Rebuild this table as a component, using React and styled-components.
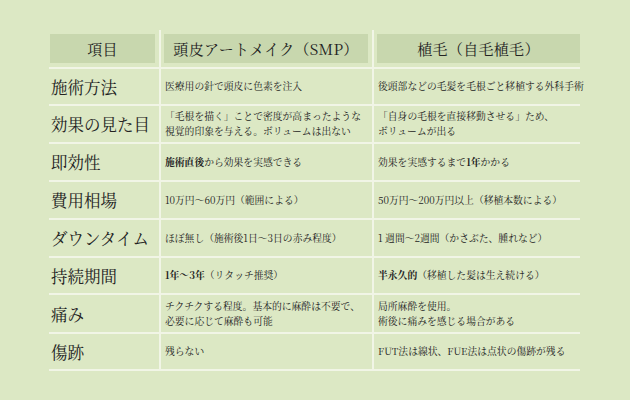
import styled, { createGlobalStyle } from 'styled-components';

const GlobalStyle = createGlobalStyle`
  html, body {
    margin: 0;
    padding: 0;
    background: #dce8c4;
  }
  body {
    font-family: "Noto Serif CJK JP", "IPAMincho", "Liberation Serif", "Noto Sans CJK JP", serif;
    color: #222;
  }
`;

const Page = styled.div`
  width: 630px;
  height: 400px;
  box-sizing: border-box;
  padding: 30px 0 0 49px;
  background: #dce8c4;
`;

const Table = styled.div`
  display: grid;
  grid-template-columns: 110px 213px 208px;
  width: 531px;
`;

const HeadCell = styled.div`
  box-sizing: border-box;
  padding: 4px ${p => (p.$last ? 0 : 4)}px 4px ${p => (p.$first ? 1 : 3)}px;
  border-left: ${p => (p.$first ? 'none' : '2px solid #f1f5e6')};
  border-bottom: 2px solid #f1f5e6;
`;

const HeadBox = styled.div`
  height: 29px;
  background: #c8d7ae;
  display: flex;
  align-items: center;
  justify-content: center;
  font-size: 15px;
  letter-spacing: 0.3px;
  white-space: nowrap;
`;

const Cell = styled.div`
  box-sizing: border-box;
  min-height: ${p => p.$h}px;
  display: flex;
  align-items: center;
  border-left: ${p => (p.$first ? 'none' : '2px solid #f1f5e6')};
  border-bottom: 2px solid #f1f5e6;
  padding: 0 0 0 ${p => (p.$first ? 2 : 4)}px;
  white-space: nowrap;
`;

const Label = styled.span`
  font-size: 16.5px;
`;

const Text = styled.span`
  font-size: 9.8px;
  line-height: 15px;
`;

const rows = [
  { h: 37, label: '施術方法', a: <>医療用の針で頭皮に色素を注入</>, b: <>後頭部などの毛髪を毛根ごと移植する外科手術</> },
  { h: 38, label: '効果の見た目', a: <>「毛根を描く」ことで密度が高まったような<br />視覚的印象を与える。ボリュームは出ない</>, b: <>「自身の毛根を直接移動させる」ため、<br />ボリュームが出る</> },
  { h: 38, label: '即効性', a: <><b>施術直後</b>から効果を実感できる</>, b: <>効果を実感するまで<b>1年</b>かかる</> },
  { h: 38, label: '費用相場', a: <>10万円～60万円（範囲による）</>, b: <>50万円～200万円以上（移植本数による）</> },
  { h: 38, label: 'ダウンタイム', a: <>ほぼ無し（施術後1日～3日の赤み程度）</>, b: <>1 週間～2週間（かさぶた、腫れなど）</> },
  { h: 37, label: '持続期間', a: <><b>1年～3年</b>（リタッチ推奨）</>, b: <><b>半永久的</b>（移植した髪は生え続ける）</> },
  { h: 39, label: '痛み', a: <>チクチクする程度。基本的に麻酔は不要で、<br />必要に応じて麻酔も可能</>, b: <>局所麻酔を使用。<br />術後に痛みを感じる場合がある</> },
  { h: 37, label: '傷跡', a: <>残らない</>, b: <>FUT法は線状、FUE法は点状の傷跡が残る</> },
];

export default function App() {
  return (
    <>
      <GlobalStyle />
      <Page>
        <Table>
          <HeadCell $first><HeadBox>項目</HeadBox></HeadCell>
          <HeadCell><HeadBox>頭皮アートメイク（SMP）</HeadBox></HeadCell>
          <HeadCell $last><HeadBox>植毛（自毛植毛）</HeadBox></HeadCell>
          {rows.map(r => (
            <>
              <Cell key={r.label + 'l'} $first $h={r.h}><Label>{r.label}</Label></Cell>
              <Cell key={r.label + 'a'} $h={r.h}><Text>{r.a}</Text></Cell>
              <Cell key={r.label + 'b'} $h={r.h}><Text>{r.b}</Text></Cell>
            </>
          ))}
        </Table>
      </Page>
    </>
  );
}
